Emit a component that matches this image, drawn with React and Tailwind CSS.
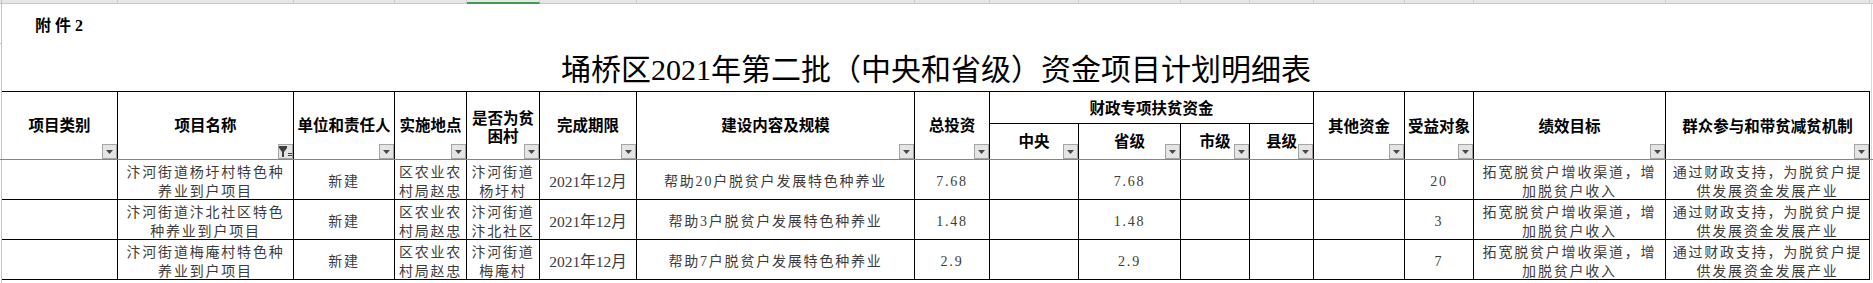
import React from "react";

const COLW = [
  "w-[116px]", "w-[176px]", "w-[101px]", "w-[72px]", "w-[73px]", "w-[97px]", "w-[278px]", "w-[75px]",
  "w-[89px]", "w-[102px]", "w-[69px]", "w-[64px]", "w-[91px]", "w-[69px]", "w-[192px]", "w-[204px]",
];

const GRID =
  "grid grid-cols-[116px_176px_101px_72px_73px_97px_278px_75px_89px_102px_69px_64px_91px_69px_192px_204px]";

const ROWS = [
  {
    name: ["汴河街道杨圩村特色种", "养业到户项目"],
    village: ["汴河街道", "杨圩村"],
    content: "帮助20户脱贫户发展特色种养业",
    total: "7.68",
    benef: "20",
  },
  {
    name: ["汴河街道汴北社区特色", "种养业到户项目"],
    village: ["汴河街道", "汴北社区"],
    content: "帮助3户脱贫户发展特色种养业",
    total: "1.48",
    benef: "3",
  },
  {
    name: ["汴河街道梅庵村特色种", "养业到户项目"],
    village: ["汴河街道", "梅庵村"],
    content: "帮助7户脱贫户发展特色种养业",
    total: "2.9",
    benef: "7",
  },
];

function FilterBtn({ funnel }) {
  return (
    <div className="absolute right-0 bottom-0 w-[15px] h-[15px] border border-[#a5a5a5] bg-[#e4e4e4] flex items-center justify-center">
      {funnel ? (
        <svg width="13" height="11" viewBox="0 0 13 11">
          <rect x="0" y="0" width="8" height="2" fill="#3f3f3f" />
          <polygon points="0,2 8,2 5,6 3,6" fill="#3f3f3f" />
          <rect x="3" y="6" width="2" height="5" fill="#3f3f3f" />
          <rect x="9" y="7" width="4" height="1" fill="#3f3f3f" />
          <rect x="9" y="9" width="4" height="1" fill="#3f3f3f" />
        </svg>
      ) : (
        <svg width="7" height="4" viewBox="0 0 7 4">
          <polygon points="0,0 7,0 3.5,4" fill="#474747" />
        </svg>
      )}
    </div>
  );
}

function HeadCell({ children, span2 = true, funnel = false, noBtn = false, extra = "" }) {
  return (
    <div
      className={`relative flex flex-col items-center justify-center text-center border-r border-black font-bold text-[15.5px] leading-[18px] text-black whitespace-nowrap ${
        span2 ? "row-span-2 border-t" : ""
      } ${extra}`}
    >
      {children}
      {!noBtn && <FilterBtn funnel={funnel} />}
    </div>
  );
}

function DataCell({ children, extra = "" }) {
  return (
    <div
      className={`flex flex-col items-center justify-center text-center border-r border-b border-black pt-[4px] text-[14px] leading-[19px] tracking-[1.8px] text-[#3b3b3b] whitespace-nowrap ${extra}`}
    >
      {children}
    </div>
  );
}

function Lines({ lines }) {
  return lines.map((l, i) => <span key={i}>{l}</span>);
}

function LeftGutter({ children }) {
  return <div className="w-[2px] shrink-0 border-r border-[#c4c4c4] flex flex-col">{children}</div>;
}

function RightGutter() {
  return (
    <div className="w-[3px] shrink-0 flex">
      <div className="w-[1px]" />
      <div className="w-[1px] bg-[#d9d9d9]" />
    </div>
  );
}

export default function App() {
  return (
    <div className="w-[1873px] h-[283px] overflow-hidden bg-white flex flex-col font-['Liberation_Serif','Noto_Sans_CJK_SC',serif]">
      {/* column header strip (cut off) */}
      <div className="flex h-[4px] shrink-0">
        <div className="w-[2px] shrink-0 bg-[#e6e6e6] border-r border-b border-[#c4c4c4]" />
        {COLW.map((w, i) => (
          <div
            key={i}
            className={`${w} shrink-0 bg-[#e6e6e6] border-r border-[#cdcdcd] ${
              i === 4 ? "border-b-2 border-b-[#3f9b4c]" : "border-b border-b-[#c9c9c9]"
            }`}
          />
        ))}
        <div className="w-[3px] shrink-0 bg-[#e6e6e6] border-b border-[#c9c9c9]" />
      </div>

      {/* title area */}
      <div className="flex h-[87px] shrink-0">
        <LeftGutter>
          <div className="h-[39px] shrink-0" />
          <div className="h-[1px] w-[1px] bg-[#c4c4c4]" />
        </LeftGutter>
        <div className="w-[1868px] shrink-0 flex flex-col">
          <div className="pl-[33px] pt-[12px] text-[16px] leading-[20px] font-bold tracking-[4px] text-black">
            附件2
          </div>
          <div className="mt-auto mb-[6px] text-center text-[30px] leading-[30px] text-black">
            埇桥区2021年第二批（中央和省级）资金项目计划明细表
          </div>
        </div>
        <RightGutter />
      </div>

      {/* header */}
      <div className="flex shrink-0">
        <LeftGutter />
        <div className={`${GRID} grid-rows-[33px_35px] w-[1868px] shrink-0`}>
          <HeadCell>项目类别</HeadCell>
          <HeadCell funnel>项目名称</HeadCell>
          <HeadCell>单位和责任人</HeadCell>
          <HeadCell>实施地点</HeadCell>
          <HeadCell extra="pt-[4px]">
            <span>是否为贫</span>
            <span>困村</span>
          </HeadCell>
          <HeadCell>完成期限</HeadCell>
          <HeadCell>建设内容及规模</HeadCell>
          <HeadCell>总投资</HeadCell>
          <div className="col-span-4 flex items-center justify-center pt-[3px] border-t border-r border-b border-black font-bold text-[15.5px] leading-[18px] text-black">
            财政专项扶贫资金
          </div>
          <HeadCell extra="pt-[2px]">其他资金</HeadCell>
          <HeadCell extra="pt-[2px]">受益对象</HeadCell>
          <HeadCell extra="pt-[2px]">绩效目标</HeadCell>
          <HeadCell extra="pt-[2px]">群众参与和带贫减贫机制</HeadCell>
          <HeadCell span2={false}>中央</HeadCell>
          <HeadCell span2={false}>省级</HeadCell>
          <HeadCell span2={false}>市级</HeadCell>
          <HeadCell span2={false}>县级</HeadCell>
        </div>
        <RightGutter />
      </div>

      {/* freeze line */}
      <div className="h-[1px] w-full shrink-0 bg-[#5aa35e]" />

      {/* body */}
      <div className="flex shrink-0">
        <LeftGutter />
        <div className={`${GRID} auto-rows-[40px] w-[1868px] shrink-0`}>
          {ROWS.map((r, i) => (
            <React.Fragment key={i}>
              <DataCell />
              <DataCell>
                <Lines lines={r.name} />
              </DataCell>
              <DataCell>新建</DataCell>
              <DataCell>
                <Lines lines={["区农业农", "村局赵忠"]} />
              </DataCell>
              <DataCell>
                <Lines lines={r.village} />
              </DataCell>
              <DataCell extra="text-[15.5px] tracking-normal">2021年12月</DataCell>
              <DataCell>{r.content}</DataCell>
              <DataCell>{r.total}</DataCell>
              <DataCell />
              <DataCell>{r.total}</DataCell>
              <DataCell />
              <DataCell />
              <DataCell />
              <DataCell>{r.benef}</DataCell>
              <DataCell>
                <Lines lines={["拓宽脱贫户增收渠道，增", "加脱贫户收入"]} />
              </DataCell>
              <DataCell>
                <Lines lines={["通过财政支持，为脱贫户提", "供发展资金发展产业"]} />
              </DataCell>
            </React.Fragment>
          ))}
        </div>
        <RightGutter />
      </div>

      <div className="flex flex-1">
        <LeftGutter />
        <div className="flex-1" />
      </div>
    </div>
  );
}
